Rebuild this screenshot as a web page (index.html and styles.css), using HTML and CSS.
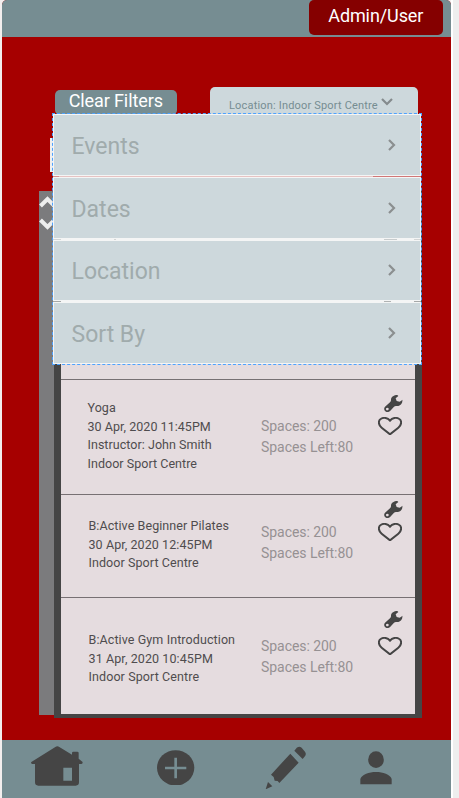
FILE: index.html
```html
<!DOCTYPE html>
<html lang="en">
<head>
<meta charset="utf-8">
<title>Timetable</title>
<link rel="stylesheet" href="styles.css">
</head>
<body>
<svg width="0" height="0" class="defs">
  <symbol id="wrench" viewBox="0 0 56 52"><path fill-rule="evenodd" d="M40 0C30 0 22 5 21 13C21 17 21 19 18 22L3 35C-1 39 0 46 4 49C8 53 15 52 19 47L30 35C33 32 36 33 40 33C49 33 56 25 56 14L47 20L38 18L35 10L43 3ZM10 38A4 4 0 1 1 9.9 38Z"/></symbol>
  <symbol id="heart" viewBox="0 0 72 56"><path d="M36 52L11 32C1 24 0 11 8 6C17 0 29 2 36 11C43 2 55 0 64 6C72 11 71 24 61 32Z"/></symbol>
  <symbol id="chevron" viewBox="0 0 8 12"><path d="M1 1L6 6L1 11"/></symbol>
</svg>
<div class="phone">
  <header class="topbar"><button class="account"><span>Admin/User</span></button></header>
  <main class="content">
    <div class="filters">
      <button class="clear"><span>Clear Filters</span></button>
      <button class="location"><span>Location: Indoor Sport Centre</span><svg class="down" viewBox="0 0 12 8"><path d="M1 1L6 6L11 1"/></svg></button>
    </div>
    <div class="board">
      <div class="scroller"><svg viewBox="0 0 16 34"><path d="M1.500 10L8.500 3L15.500 10M1.500 24L8.500 31L15.500 24"/></svg></div>
      <div class="sessions">
        <div class="covered"></div>
        <article class="session yoga">
          <div class="details">Yoga<br>30 Apr, 2020 11:45PM<br>Instructor: John Smith<br>Indoor Sport Centre</div>
          <div class="spaces">Spaces: 200<br>Spaces Left:80</div>
          <div class="actions"><svg class="wrench"><use href="#wrench"/></svg><svg class="heart"><use href="#heart"/></svg></div>
        </article>
        <article class="session pilates">
          <div class="details">B:Active Beginner Pilates<br>30 Apr, 2020 12:45PM<br>Indoor Sport Centre</div>
          <div class="spaces">Spaces: 200<br>Spaces Left:80</div>
          <div class="actions"><svg class="wrench"><use href="#wrench"/></svg><svg class="heart"><use href="#heart"/></svg></div>
        </article>
        <article class="session gym">
          <div class="details">B:Active Gym Introduction<br>31 Apr, 2020 10:45PM<br>Indoor Sport Centre</div>
          <div class="spaces">Spaces: 200<br>Spaces Left:80</div>
          <div class="actions"><svg class="wrench"><use href="#wrench"/></svg><svg class="heart"><use href="#heart"/></svg></div>
        </article>
      </div>
    </div>
    <div class="menu-tab"></div>
    <div class="menu">
      <div class="item events"><span>Events</span><svg><use href="#chevron"/></svg></div>
      <div class="seam seam-red"></div>
      <div class="item dates"><span>Dates</span><svg><use href="#chevron"/></svg></div>
      <div class="seam seam-marks"></div>
      <div class="item place"><span>Location</span><svg><use href="#chevron"/></svg></div>
      <div class="seam seam-ends"></div>
      <div class="item sort"><span>Sort By</span><svg><use href="#chevron"/></svg></div>
    </div>
  </main>
  <nav class="tabs">
    <svg class="home" viewBox="93 49 156 120"><path fill-rule="evenodd" d="M166 52Q172 47 178 52L216 75V70Q216 66 220 66H232Q236 66 236 70V87L247 96Q250 102 244 103H237V158Q237 168 227 168H115Q105 168 105 158V103H97Q91 101 94 97ZM190 114V153H216V114Z"/></svg>
    <svg class="add" viewBox="472 59 112 107"><ellipse cx="528" cy="112.500" rx="56" ry="53"/><path d="M496 113H560M528 82V144"/></svg>
    <svg class="edit" viewBox="108 48 124 130"><path d="M198 60Q207 45 218 53L228 65Q234 74 226 81L221 87L196 62ZM184 71L209 98L151 159L146 153L137 152L134 141L126 134ZM117 156L130 169L110 178Z"/></svg>
    <svg class="person" viewBox="392 64 96 102"><ellipse cx="440" cy="90" rx="23.500" ry="25"/><path d="M393 164V148C398 134 419 127 440 127C461 127 482 134 487 148V164Z"/></svg>
  </nav>
</div>
</body>
</html>
```

FILE: styles.css
```css
* { box-sizing: border-box; }
body { margin: 0; height: 798px; overflow: hidden; background: linear-gradient(90deg, #f3eeee 451px, #fff 451px, #fff 453px, #eee 453px); font-family: Roboto, sans-serif; }
svg { display: block; flex: none; }
.defs { position: absolute; }
button { border: 0; padding: 0; font: inherit; }
.phone { width: 449px; height: 798px; margin-left: 2px; display: flex; flex-direction: column; background: #a60000; border-radius: 5px 5px 0 0; overflow: hidden; }
.topbar { height: 37px; flex: none; background: #768d92; display: flex; justify-content: flex-end; padding-right: 8px; }
.account { width: 134.500px; height: 34.500px; border-radius: 5px; background: #850000; color: #fff; font-size: 18px; line-height: 22px; padding: 5px 0 8px; letter-spacing: -.1px; }
.content { position: relative; height: 703px; flex: none; padding-top: 49.5px; }
.filters { display: flex; height: 104px; padding-left: 52.500px; align-items: flex-start; }
.clear { width: 122.500px; height: 25px; margin-top: 3px; border-radius: 5px; background: #768d92; color: #fff; font-size: 18px; line-height: 22px; padding-bottom: 4px; letter-spacing: -.1px; }
.location { width: 207.500px; height: 40px; margin-left: 33px; border-radius: 5px; background: #cdd8dc; color: #768d92; display: flex; align-items: flex-start; padding: 11px 0 0 19px; font-size: 11px; line-height: 16px; letter-spacing: .18px; white-space: nowrap; }
.down { width: 12px; height: 8px; margin-left: 3px; fill: none; stroke: #858b8d; stroke-width: 2.2; }
.board { display: flex; margin-left: 36.500px; }
.scroller { width: 15.500px; height: 524px; background: #7b7b7d; padding-top: 5px; }
.scroller svg { width: 16px; height: 34px; fill: none; stroke: #eee; stroke-width: 4; }
.sessions { width: 367.5px; height: 527.5px; background: #e5dcdf; border: solid #454545; border-width: 0 7px 4px 7px; }
.covered { height: 189.5px; border-bottom: 1px solid #777073; }
.session { display: grid; grid-template-columns: 200px 117px 36px; border-bottom: 1px solid #777073; }
.yoga { height: 115px; }
.pilates { height: 103px; }
.gym { height: 116px; border: 0; }
.details { color: #4f4c4e; font-size: 12.5px; line-height: 18.700px; padding: 19px 0 0 26.500px; letter-spacing: .04px; white-space: nowrap; }
.pilates .details { padding: 22px 0 0 27.500px; letter-spacing: .08px; }
.gym .details { padding: 33px 0 0 27.500px; letter-spacing: .1px; }
.spaces { color: #969193; font-size: 14px; line-height: 21px; padding-top: 36px; white-space: nowrap; letter-spacing: -.05px; }
.pilates .spaces { padding-top: 27px; }
.gym .spaces { padding-top: 38px; }
.actions { padding-top: 15px; }
.pilates .actions { padding-top: 6px; }
.gym .actions { padding-top: 13px; }
.wrench { width: 18.7px; height: 17.3px; margin-left: 6px; fill: #454545; }
.heart { width: 24px; height: 18.7px; margin-top: 4.500px; fill: none; stroke: #454545; stroke-width: 6; }
.gym .heart { margin-top: 8.500px; }
.menu-tab { position: absolute; left: 48px; top: 101px; width: 3px; height: 34px; background: #eee; }
.menu { position: absolute; left: 50px; top: 76px; width: 370px; height: 252px; border: 1px dashed #4da2ff; display: flex; flex-direction: column; background: linear-gradient(#f4f5f5, #f4f5f5) content-box; }
.item { flex: 1; margin: 1px; display: flex; align-items: center; justify-content: space-between; padding: 3px 24px 0 17.500px; color: #a0abac; font-size: 23px; line-height: 29px; background: #cdd8dc; }
.item svg { width: 8px; height: 12px; margin-top: -3px; fill: none; stroke: #8b8f90; stroke-width: 2.2; }
.seam { height: 1px; flex: none; }
.seam-red { background: linear-gradient(90deg, #d98f8f 6px, #e6c3c3 6px, #e6c3c3 320px, #d07777 320px); }
.seam-marks { background: linear-gradient(90deg, #d3d5d5 8px, #f4f5f5 8px, #f4f5f5 61px, #d3d5d5 61px, #d3d5d5 63px, #f4f5f5 63px, #f4f5f5 331px, #c8cccd 331px, #c8cccd 344px, #f4f5f5 344px, #f4f5f5 361px, #d3d5d5 361px); }
.seam-ends { background: linear-gradient(90deg, #a5a8a8 8px, #f4f5f5 8px, #f4f5f5 331px, #b0b3b3 331px, #b0b3b3 338px, #f4f5f5 338px, #f4f5f5 361px, #a5a8a8 361px); }
.tabs { height: 58px; flex: none; background: #768d92; display: flex; align-items: flex-start; padding-left: 29px; fill: #454545; }
.home { width: 52px; height: 40px; margin-top: 6.300px; }
.add { width: 37.300px; height: 35.700px; margin: 9.700px 0 0 74.300px; }
.add path { stroke: #768d92; stroke-width: 8; }
.edit { width: 41.300px; height: 43.300px; margin: 6px 0 0 70.300px; }
.person { width: 32px; height: 34px; margin: 11.300px 0 0 53.400px; }
```
